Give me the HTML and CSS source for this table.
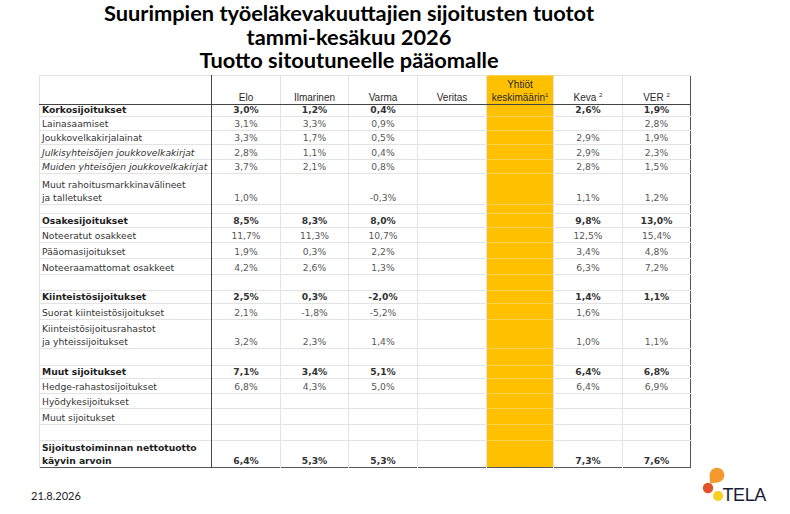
FILE: index.html
```html
<!DOCTYPE html>
<html lang="fi">
<head>
<meta charset="utf-8">
<title>Sijoitusten tuotot</title>
<link rel="stylesheet" href="styles.css">
</head>
<body>
<div class="page">
  <h1 class="title">Suurimpien työeläkevakuuttajien sijoitusten tuotot<br>tammi-kesäkuu 2026<br>Tuotto sitoutuneelle pääomalle</h1>
  <table class="grid">
    <colgroup>
      <col class="w-lbl"><col class="w69"><col class="w68"><col class="w69"><col class="w69"><col class="w67"><col class="w69"><col class="w68">
    </colgroup>
    <thead>
      <tr class="r-head">
        <th class="lbl"></th><th>Elo</th><th>Ilmarinen</th><th>Varma</th><th>Veritas</th><th class="avg">Yhtiöt<br>keskimäärin<sup>1</sup></th><th>Keva <sup>2</sup></th><th>VER <sup>2</sup></th>
      </tr>
    </thead>
    <tbody>
      <tr class="b h12"><td class="lbl">Korkosijoitukset</td><td>3,0%</td><td>1,2%</td><td>0,4%</td><td></td><td class="avg"></td><td>2,6%</td><td>1,9%</td></tr>
      <tr class="h14"><td class="lbl">Lainasaamiset</td><td>3,1%</td><td>3,3%</td><td>0,9%</td><td></td><td class="avg"></td><td></td><td>2,8%</td></tr>
      <tr class="h14"><td class="lbl">Joukkovelkakirjalainat</td><td>3,3%</td><td>1,7%</td><td>0,5%</td><td></td><td class="avg"></td><td>2,9%</td><td>1,9%</td></tr>
      <tr class="h15"><td class="lbl it">Julkisyhteisöjen joukkovelkakirjat</td><td>2,8%</td><td>1,1%</td><td>0,4%</td><td></td><td class="avg"></td><td>2,9%</td><td>2,3%</td></tr>
      <tr class="h14"><td class="lbl it">Muiden yhteisöjen joukkovelkakirjat</td><td>3,7%</td><td>2,1%</td><td>0,8%</td><td></td><td class="avg"></td><td>2,8%</td><td>1,5%</td></tr>
      <tr class="two h31"><td class="lbl">Muut rahoitusmarkkinavälineet<br>ja talletukset</td><td>1,0%</td><td></td><td>-0,3%</td><td></td><td class="avg"></td><td>1,1%</td><td>1,2%</td></tr>
      <tr class="h9"><td class="lbl"></td><td></td><td></td><td></td><td></td><td class="avg"></td><td></td><td></td></tr>
      <tr class="b h14"><td class="lbl">Osakesijoitukset</td><td>8,5%</td><td>8,3%</td><td>8,0%</td><td></td><td class="avg"></td><td>9,8%</td><td>13,0%</td></tr>
      <tr class="h15"><td class="lbl">Noteeratut osakkeet</td><td>11,7%</td><td>11,3%</td><td>10,7%</td><td></td><td class="avg"></td><td>12,5%</td><td>15,4%</td></tr>
      <tr class="h16"><td class="lbl">Pääomasijoitukset</td><td>1,9%</td><td>0,3%</td><td>2,2%</td><td></td><td class="avg"></td><td>3,4%</td><td>4,8%</td></tr>
      <tr class="h16"><td class="lbl">Noteeraamattomat osakkeet</td><td>4,2%</td><td>2,6%</td><td>1,3%</td><td></td><td class="avg"></td><td>6,3%</td><td>7,2%</td></tr>
      <tr class="h16"><td class="lbl"></td><td></td><td></td><td></td><td></td><td class="avg"></td><td></td><td></td></tr>
      <tr class="b h13"><td class="lbl">Kiinteistösijoitukset</td><td>2,5%</td><td>0,3%</td><td>-2,0%</td><td></td><td class="avg"></td><td>1,4%</td><td>1,1%</td></tr>
      <tr class="h16"><td class="lbl">Suorat kiinteistösijoitukset</td><td>2,1%</td><td>-1,8%</td><td>-5,2%</td><td></td><td class="avg"></td><td>1,6%</td><td></td></tr>
      <tr class="two h29"><td class="lbl">Kiinteistösijoitusrahastot<br>ja yhteissijoitukset</td><td>3,2%</td><td>2,3%</td><td>1,4%</td><td></td><td class="avg"></td><td>1,0%</td><td>1,1%</td></tr>
      <tr class="h17"><td class="lbl"></td><td></td><td></td><td></td><td></td><td class="avg"></td><td></td><td></td></tr>
      <tr class="b h13"><td class="lbl">Muut sijoitukset</td><td>7,1%</td><td>3,4%</td><td>5,1%</td><td></td><td class="avg"></td><td>6,4%</td><td>6,8%</td></tr>
      <tr class="h15"><td class="lbl">Hedge-rahastosijoitukset</td><td>6,8%</td><td>4,3%</td><td>5,0%</td><td></td><td class="avg"></td><td>6,4%</td><td>6,9%</td></tr>
      <tr class="h15"><td class="lbl">Hyödykesijoitukset</td><td></td><td></td><td></td><td></td><td class="avg"></td><td></td><td></td></tr>
      <tr class="h16"><td class="lbl">Muut sijoitukset</td><td></td><td></td><td></td><td></td><td class="avg"></td><td></td><td></td></tr>
      <tr class="h16"><td class="lbl"></td><td></td><td></td><td></td><td></td><td class="avg"></td><td></td><td></td></tr>
      <tr class="b two h26"><td class="lbl">Sijoitustoiminnan nettotuotto<br>käyvin arvoin</td><td>6,4%</td><td>5,3%</td><td>5,3%</td><td></td><td class="avg"></td><td>7,3%</td><td>7,6%</td></tr>
    </tbody>
  </table>
  <div class="foot">
    <span class="date">21.8.2026</span>
    <svg class="logo" viewBox="0 0 72 40" width="72" height="40" aria-label="TELA">
      <path d="M12 16.5 L11.6 8 A7.4 7.4 0 1 1 20.9 15.2 Z" fill="#F39A2E"/>
      <circle cx="10" cy="21" r="5.2" fill="#E4522B"/>
      <circle cx="20" cy="29" r="5" fill="#F8CE1F"/>
      <text x="24.5" y="34" class="logo-text">TELA</text>
    </svg>
  </div>
</div>
</body>
</html>
```

FILE: styles.css
```css
* { box-sizing: border-box; }
html, body { margin: 0; padding: 0; background: #fff; }
body { width: 790px; height: 514px; overflow: hidden; font-family: "DejaVu Sans", sans-serif; }

.page { display: flex; flex-direction: column; }

.title {
  margin: 0;
  padding-top: 1px;
  width: 698px;
  text-align: center;
  font: 700 21.8px/23.5px Lato, "Liberation Sans", sans-serif;
  color: #000;
}

.grid {
  margin: 3.5px 0 0 39px;
  width: 651px;
  table-layout: fixed;
  border-collapse: collapse;
  border: 1px solid #555;
  font-size: 9.2px;
  color: #585858;
}
.w-lbl { width: 172px; }
.w69 { width: 69px; }
.w68 { width: 68px; }
.w67 { width: 67px; }

.grid td, .grid th {
  padding: 0 2px 1px;
  line-height: 10px;
  vertical-align: bottom;
  text-align: center;
  white-space: nowrap;
  overflow: hidden;
  border-top: 1px solid #e3e3e3;
  border-left: 1px solid #e3e3e3;
}
.grid .lbl {
  text-align: left;
  color: #333;
  border-right: 1px solid #444;
  padding-left: 2px;
}
.grid .it { font-style: italic; }

.grid thead th {
  font: 400 10px/13px "Liberation Sans", Arial, sans-serif;
  color: #2a2a2a;
  border-bottom: 1px solid #444;
  padding-bottom: 0;
}
.grid sup { font-size: 6px; vertical-align: 4px; line-height: 0; }
.grid .avg {
  background: #FFC000;
  border-top-color: #ffd34d;
  border-left-color: #e3e3e3;
}

.b td { font-weight: 700; color: #333; }
.b td.lbl { color: #1e1e1e; }
.two td { line-height: 13px; padding-bottom: 0; }

.r-head { height: 29px; }
.h9 { height: 9px; }
.h12 { height: 12px; }
.h13 { height: 13px; }
.h14 { height: 14px; }
.h15 { height: 15px; }
.h16 { height: 16px; }
.h17 { height: 17px; }
.h26 { height: 26px; }
.h29 { height: 29px; }
.h31 { height: 31px; }

.foot {
  display: flex;
  justify-content: space-between;
  align-items: flex-start;
  padding: 0 20px 0 31px;
}
.date {
  margin-top: 21px;
  font: 400 11px/14px Lato, "Liberation Sans", sans-serif;
  color: #222;
}
.logo { display: block; margin-top: -1px; }
.logo-text {
  font-family: "Liberation Sans", Arial, sans-serif;
  font-size: 18px;
  fill: #1c1c36;
  letter-spacing: -0.4px;
}
```
